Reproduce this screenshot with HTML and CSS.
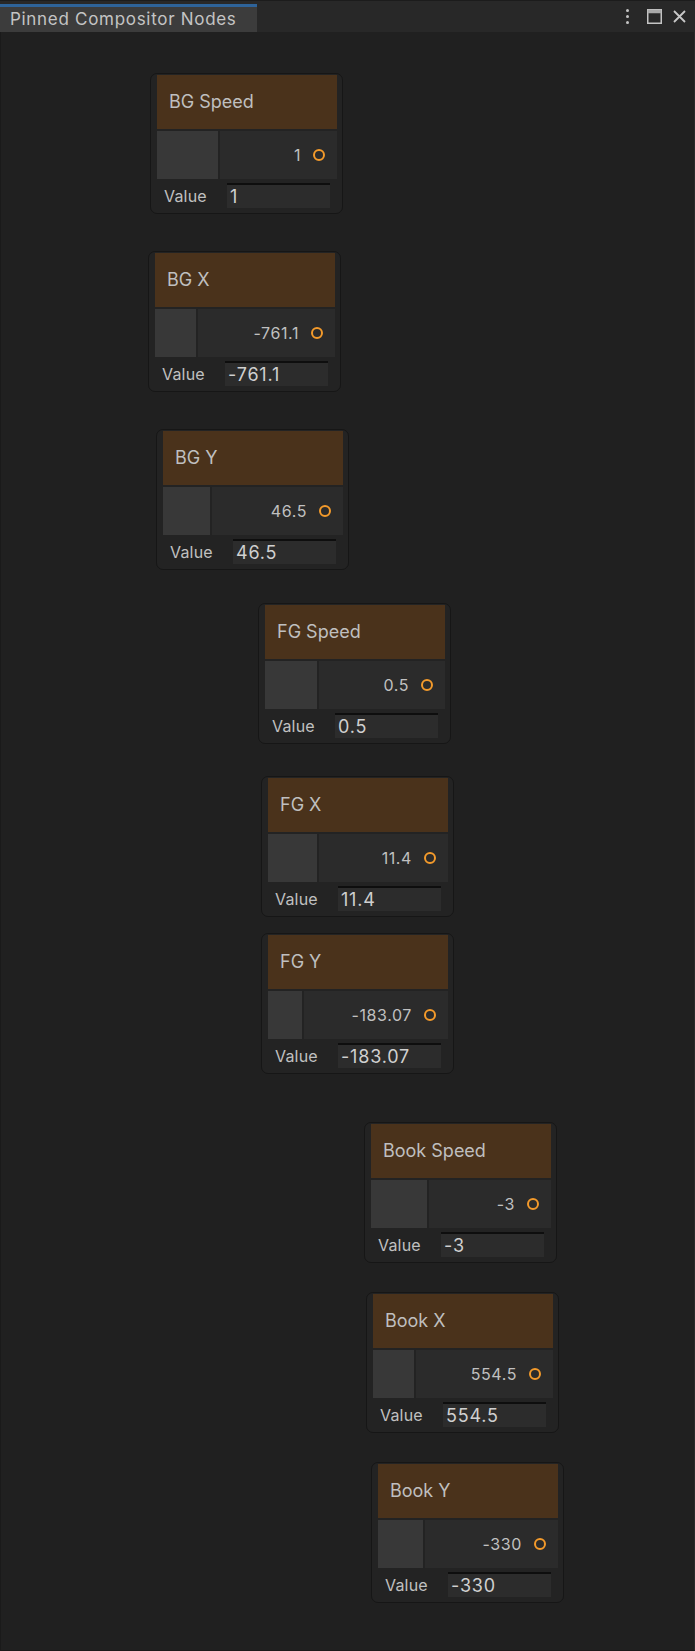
FILE: index.html
```html
<!DOCTYPE html>
<html lang="en">
<head>
    <meta charset="UTF-8">
    <meta name="viewport" content="width=device-width, initial-scale=1.0">
    <title>Pinned Compositor Nodes</title>
    <link rel="stylesheet" href="styles.css">
</head>
<body>
    <div class="window">
        <div class="tab-bar">
            <div class="tab">Pinned Compositor Nodes</div>
            <div class="tab-tools">
                <span class="kebab"><i></i><i></i><i></i></span>
                <svg class="tool-icon" width="15" height="15" viewBox="0 0 15 15">
                    <rect x="0.75" y="0.75" width="13.5" height="13.5" fill="none" stroke="#c4c4c4" stroke-width="1.5"/>
                    <rect x="0.75" y="0.75" width="13.5" height="3.5" fill="#a8a8a8"/>
                </svg>
                <svg class="tool-icon" width="13" height="13" viewBox="0 0 13 13">
                    <path d="M1 1 L12 12 M12 1 L1 12" stroke="#c8c8c8" stroke-width="1.8" fill="none"/>
                </svg>
            </div>
        </div>

        <div class="canvas">
            <!-- nodes sit where they were dropped on the graph -->
            <div class="node" style="left:149px;top:41px">
                <div class="node-title">BG Speed</div>
                <div class="port-row">
                    <div class="port-swatch" style="width:61px"></div>
                    <div class="port-out"><span class="port-label">1</span><span class="port-dot"></span></div>
                </div>
                <div class="field-row"><span class="field-label">Value</span><span class="field-input">1</span></div>
            </div>

            <div class="node" style="left:147px;top:219px">
                <div class="node-title">BG X</div>
                <div class="port-row">
                    <div class="port-swatch" style="width:41px"></div>
                    <div class="port-out"><span class="port-label">-761.1</span><span class="port-dot"></span></div>
                </div>
                <div class="field-row"><span class="field-label">Value</span><span class="field-input">-761.1</span></div>
            </div>

            <div class="node" style="left:155px;top:397px">
                <div class="node-title">BG Y</div>
                <div class="port-row">
                    <div class="port-swatch" style="width:47px"></div>
                    <div class="port-out"><span class="port-label">46.5</span><span class="port-dot"></span></div>
                </div>
                <div class="field-row"><span class="field-label">Value</span><span class="field-input">46.5</span></div>
            </div>

            <div class="node" style="left:257px;top:571px">
                <div class="node-title">FG Speed</div>
                <div class="port-row">
                    <div class="port-swatch" style="width:52px"></div>
                    <div class="port-out"><span class="port-label">0.5</span><span class="port-dot"></span></div>
                </div>
                <div class="field-row"><span class="field-label">Value</span><span class="field-input">0.5</span></div>
            </div>

            <div class="node" style="left:260px;top:744px">
                <div class="node-title">FG X</div>
                <div class="port-row">
                    <div class="port-swatch" style="width:49px"></div>
                    <div class="port-out"><span class="port-label">11.4</span><span class="port-dot"></span></div>
                </div>
                <div class="field-row"><span class="field-label">Value</span><span class="field-input">11.4</span></div>
            </div>

            <div class="node" style="left:260px;top:901px">
                <div class="node-title">FG Y</div>
                <div class="port-row">
                    <div class="port-swatch" style="width:34px"></div>
                    <div class="port-out"><span class="port-label">-183.07</span><span class="port-dot"></span></div>
                </div>
                <div class="field-row"><span class="field-label">Value</span><span class="field-input">-183.07</span></div>
            </div>

            <div class="node" style="left:363px;top:1090px">
                <div class="node-title">Book Speed</div>
                <div class="port-row">
                    <div class="port-swatch" style="width:56px"></div>
                    <div class="port-out"><span class="port-label">-3</span><span class="port-dot"></span></div>
                </div>
                <div class="field-row"><span class="field-label">Value</span><span class="field-input">-3</span></div>
            </div>

            <div class="node" style="left:365px;top:1260px">
                <div class="node-title">Book X</div>
                <div class="port-row">
                    <div class="port-swatch" style="width:41px"></div>
                    <div class="port-out"><span class="port-label">554.5</span><span class="port-dot"></span></div>
                </div>
                <div class="field-row"><span class="field-label">Value</span><span class="field-input">554.5</span></div>
            </div>

            <div class="node" style="left:370px;top:1430px">
                <div class="node-title">Book Y</div>
                <div class="port-row">
                    <div class="port-swatch" style="width:45px"></div>
                    <div class="port-out"><span class="port-label">-330</span><span class="port-dot"></span></div>
                </div>
                <div class="field-row"><span class="field-label">Value</span><span class="field-input">-330</span></div>
            </div>
        </div>
    </div>
</body>
</html>
```

FILE: styles.css
```css
* {
    margin: 0;
    padding: 0;
    box-sizing: border-box;
}

html, body {
    width: 695px;
    height: 1651px;
    background: #202020;
    font-family: Inter, "Noto Sans", sans-serif;
    color: #c4c4c4;
    overflow: hidden;
}

.window {
    display: flex;
    flex-direction: column;
    height: 1651px;
}

.tab-bar {
    height: 32px;
    background: #282828;
    border-top: 1px solid #1c1c1c;
    display: flex;
    align-items: flex-end;
    justify-content: space-between;
}

.tab {
    width: 257px;
    height: 28px;
    background: #3c3c3c;
    border-top: 3px solid #2e6399;
    font-size: 17px;
    letter-spacing: 0.7px;
    line-height: 25px;
    padding-left: 10px;
    color: #c4c4c4;
    white-space: nowrap;
}

.tab-tools {
    align-self: stretch;
    display: flex;
    align-items: center;
    gap: 11px;
    padding-right: 9px;
}

.kebab {
    display: flex;
    flex-direction: column;
    gap: 3px;
    margin-right: 7px;
}

.kebab i {
    display: block;
    width: 3px;
    height: 3px;
    border-radius: 50%;
    background: #c4c4c4;
}

.tool-icon {
    display: block;
}

.canvas {
    flex: 1;
    position: relative;
    background: #202020;
    border-left: 1px solid #1a1a1a;
    border-right: 1px solid #2a2a2a;
    border-bottom: 1px solid #1a1a1a;
}

.node {
    position: absolute;
    width: 193px;
    padding: 1px 5px 5px 6px;
    background: #232323;
    border: 1px solid #161616;
    border-radius: 7px;
}

.node-title {
    height: 54px;
    background: #4a321b;
    font-size: 18px;
    line-height: 54px;
    padding-left: 12px;
    color: #bfbfbf;
}

.port-row {
    display: flex;
    gap: 2px;
    height: 48px;
    margin-top: 2px;
}

.port-swatch {
    background: #383838;
}

.port-out {
    flex: 1;
    background: #2b2b2b;
    display: flex;
    align-items: center;
    justify-content: flex-end;
    gap: 12px;
    padding-right: 12px;
}

.port-label {
    font-size: 16px;
    letter-spacing: 0.6px;
    color: #c0c0c0;
}

.port-dot {
    width: 12px;
    height: 12px;
    border: 2px solid #f39a2b;
    border-radius: 50%;
}

.field-row {
    display: flex;
    align-items: center;
    height: 25px;
    margin-top: 4px;
}

.field-label {
    width: 70px;
    padding-left: 7px;
    font-size: 16px;
    letter-spacing: 0.2px;
    color: #c0c0c0;
}

.field-input {
    flex: 1;
    height: 25px;
    margin-right: 7px;
    background: #2c2c2c;
    border-top: 2px solid #0e0e0e;
    padding-left: 3px;
    font-size: 18px;
    letter-spacing: 0.8px;
    line-height: 23px;
    color: #d0d0d0;
}
```
